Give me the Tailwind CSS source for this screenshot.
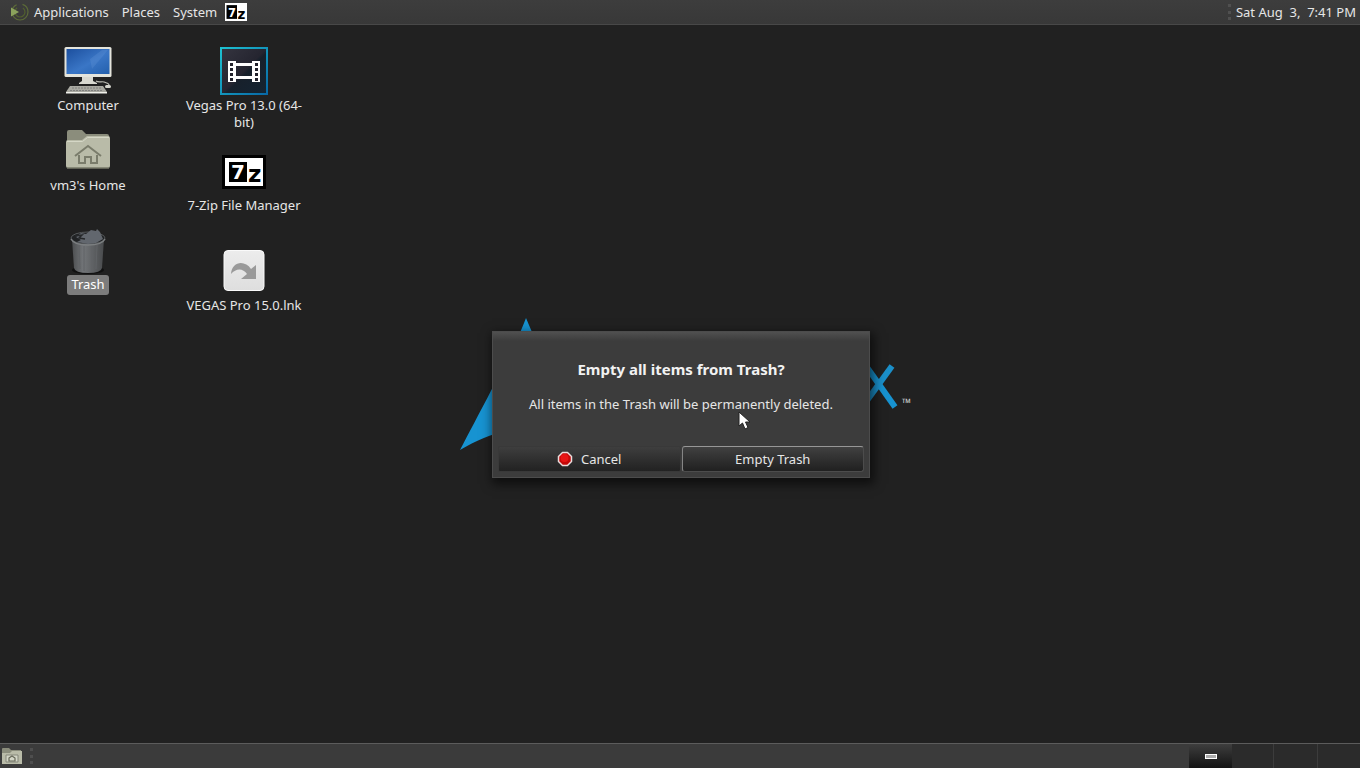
<!DOCTYPE html>
<html lang="en">
<head>
    <meta charset="UTF-8">
    <meta name="viewport" content="width=device-width, initial-scale=1.0">
    <title>Desktop</title>
    <script src="https://cdn.jsdelivr.net/npm/@tailwindcss/browser@4"></script>
</head>
<body class="flex h-screen flex-col overflow-hidden bg-[#212121] font-['Noto_Sans',sans-serif] text-[13px] leading-[17px] text-[#e6e6e6]">

    <!-- Top panel -->
    <header class="flex h-[25px] shrink-0 items-center justify-between border-b border-[#484848] bg-linear-to-b from-[#3d3d3d] to-[#383838] pr-1 pl-2">
        <nav class="flex items-center">
            <button class="flex items-center gap-1">
                <svg class="h-[22px] w-[22px]" viewBox="0 0 22 22" fill="none">
                    <circle cx="12" cy="11" r="8" stroke="#5c6b38" stroke-width="1.2" stroke-dasharray="34 6" />
                    <circle cx="12" cy="11" r="5" stroke="#52602f" stroke-width="1.2" stroke-dasharray="20 6" />
                    <path d="M3 6.500v9l8-4.500z" fill="#8ba35c" />
                </svg>
                Applications
            </button>
            <button class="ml-[13px]">Places</button>
            <button class="ml-[13px]">System</button>
            <button class="ml-2" aria-label="7-Zip">
                <svg class="h-[18px] w-[22px]" viewBox="0 0 44 34" preserveAspectRatio="none">
                    <rect width="44" height="34" fill="#fff" />
                    <rect x="3" y="4" width="21" height="26" fill="#000" />
                    <text x="6" y="26" font-family="DejaVu Sans" font-weight="bold" font-size="23" fill="#fff">7</text>
                    <text x="25" y="30" font-family="DejaVu Sans" font-weight="bold" font-size="27" fill="#000">z</text>
                </svg>
            </button>
        </nav>
        <div class="flex items-center gap-1">
            <span class="h-4 w-1 border-l-3 border-dotted border-[#505050]"></span>
            <time class="whitespace-pre">Sat Aug  3,  7:41 PM</time>
        </div>
    </header>

    <main class="relative flex-1">
        <!-- Wallpaper logo -->
        <div class="absolute inset-0 flex items-center justify-center">
            <svg class="h-[132px] w-[462px]" viewBox="0 0 462 132">
                <path d="M77 0C71 15 67 25 60 40C65 45 70 50 79 56C69 52 62 48 57 43C47 64 32 92 11 132C28 122 42 116 58 113C54 93 64 80 77 80C90 80 100 93 96 113C112 116 126 122 143 132C121 92 95 44 77 0Z" fill="#1793d1" />
                <path d="M417 48L446 89" stroke="#1793d1" stroke-width="6" />
                <path d="M443 48L414 88" stroke="#1b8fc9" stroke-width="6" />
                <text x="453" y="89" font-family="Noto Sans" font-size="12" fill="#c8c8c8">™</text>
            </svg>
        </div>

        <!-- Desktop icons -->
        <div class="absolute top-[22px] left-[28px] flex gap-9 text-center">
            <ul class="flex w-[120px] flex-col items-center">
                <li class="flex h-[67px] flex-col items-center justify-between">
                    <svg class="h-12 w-12" viewBox="0 0 48 48">
                        <defs>
                            <linearGradient id="screen" x1="0" y1="0" x2="1" y2="1">
                                <stop offset="0" stop-color="#1c4f9e" />
                                <stop offset=".55" stop-color="#3a76c6" />
                                <stop offset="1" stop-color="#2460ad" />
                            </linearGradient>
                        </defs>
                        <rect x=".5" y="0" width="47" height="30" rx="1.500" fill="#e4e4dc" />
                        <rect x="2.500" y="2" width="43" height="25" fill="url(#screen)" />
                        <path d="M26 12L38 3h6L28 22z" fill="#6d9cda" opacity=".25" />
                        <path d="M18 30h11v4l4 2v1H15v-1l3-2z" fill="#d8d8d0" />
                        <path d="M32 34c3 2 6 0 8 1s5 1 5 3" fill="none" stroke="#bdbdb5" stroke-width="1.200" />
                        <path d="M6 39h33l4 6H2z" fill="#a9a9a1" />
                        <path d="M8 41h29M6 43.500h33" stroke="#777" stroke-width=".8" stroke-dasharray="2 1" />
                        <path d="M2 45h41v1.500H2z" fill="#f0f0ea" />
                        <rect x="41" y="38" width="6" height="3" rx="1.500" fill="#d6d6ce" />
                    </svg>
                    <span>Computer</span>
                </li>
                <li class="mt-4 flex h-[64px] flex-col items-center justify-between">
                    <svg class="h-10 w-[44px]" viewBox="0 0 44 40">
                        <path d="M1 2q0-2 2-2h13l4 4h21q2 0 2 2v12H1z" fill="#8b8d7c" />
                        <path d="M0 12q0-2 2-2h14l5-4h21q2 0 2 2v28q0 2-2 2H2q-2 0-2-2z" fill="#b9bba8" />
                        <path d="M1 11.500h15.500L21.500 7.500H43" fill="none" stroke="#d5d7c6" />
                        <path d="M9 26L22 16l13 10M13 25v8h6v-6h6v6h6v-8" fill="none" stroke="#7a7c6b" stroke-width="2" />
                        <path d="M1 38h42" stroke="#777969" stroke-width="1.500" />
                    </svg>
                    <span>vm3's Home</span>
                </li>
                <li class="mt-[34px] flex h-[67px] flex-col items-center justify-between">
                    <svg class="h-[46px] w-9" viewBox="0 0 36 46">
                        <defs>
                            <linearGradient id="bin">
                                <stop offset="0" stop-color="#4c4e50" />
                                <stop offset=".35" stop-color="#727578" />
                                <stop offset="1" stop-color="#494b4d" />
                            </linearGradient>
                        </defs>
                        <ellipse cx="18" cy="42" rx="16" ry="4" fill="#111" />
                        <path d="M2 11l2 29q1 5 14 5t14-5l2-29z" fill="url(#bin)" />
                        <path d="M9 17l1 24M14 18v25M22 18v25M27 17l-1 24" stroke="#606366" />
                        <ellipse cx="18" cy="10" rx="17" ry="6" fill="#202224" stroke="#55585a" />
                        <path d="M6 9l5-4 5 1 5-4 5 1 1-2 3 3 3 7-7 4-8 1-11-2 4-2z" fill="#62676e" />
                        <path d="M5 8l7-1-3 3 6 1" fill="none" stroke="#26282a" stroke-width="1.500" />
                        <path d="M1 11q3 6 17 6t17-6" fill="none" stroke="#7c7f81" stroke-width="1.500" />
                    </svg>
                    <span class="rounded-[3px] bg-[#7c7c7c] px-1 pt-px pb-[2px] text-white">Trash</span>
                </li>
            </ul>

            <ul class="flex w-[120px] flex-col items-center">
                <li class="flex h-[84px] flex-col items-center justify-between">
                    <svg class="h-12 w-12" viewBox="0 0 48 48">
                        <defs>
                            <linearGradient id="frame" x1="0" y1="0" x2="1" y2="1">
                                <stop offset="0" stop-color="#1ec3d2" />
                                <stop offset="1" stop-color="#0767a6" />
                            </linearGradient>
                            <linearGradient id="face" x1="0" y1="0" x2="1" y2="1">
                                <stop offset="0" stop-color="#34343f" />
                                <stop offset=".5" stop-color="#252530" />
                                <stop offset=".55" stop-color="#17202b" />
                                <stop offset="1" stop-color="#142432" />
                            </linearGradient>
                        </defs>
                        <rect width="48" height="48" fill="url(#frame)" />
                        <rect x="2" y="2" width="44" height="44" fill="url(#face)" />
                        <path d="M8 14h8v2h16v-2h8v21h-8v-3H16v3H8zM16 19v10h16V19z" fill="#fff" fill-rule="evenodd" />
                        <path d="M10 16h3v3h-3zM10 21h3v3h-3zM10 26h3v3h-3zM10 31h3v3h-3zM35 16h3v3h-3zM35 21h3v3h-3zM35 26h3v3h-3zM35 31h3v3h-3z" fill="#22222c" />
                    </svg>
                    <span>Vegas Pro 13.0 (64-<br>bit)</span>
                </li>
                <li class="mt-6 flex h-[59px] flex-col items-center justify-between">
                    <svg class="h-[34px] w-[44px]" viewBox="0 0 44 34">
                        <rect width="44" height="34" fill="#000" />
                        <rect x="3" y="3" width="38" height="28" fill="#fff" />
                        <rect x="7" y="7" width="18" height="20" fill="#000" />
                        <text x="9" y="24" font-family="DejaVu Sans" font-weight="bold" font-size="20" fill="#fff">7</text>
                        <text x="26" y="27" font-family="DejaVu Sans" font-weight="bold" font-size="23" fill="#000">z</text>
                    </svg>
                    <span>7-Zip File Manager</span>
                </li>
                <li class="mt-9 flex h-[64px] flex-col items-center justify-between">
                    <svg class="h-[42px] w-[42px]" viewBox="0 0 42 42">
                        <defs>
                            <linearGradient id="tile" x1="0" y1="0" x2="0" y2="1">
                                <stop offset="0" stop-color="#ececec" />
                                <stop offset="1" stop-color="#dedede" />
                            </linearGradient>
                        </defs>
                        <rect x="1" y=".5" width="40" height="40" rx="4" fill="url(#tile)" stroke="#fafafa" />
                        <path d="M8 24C9 11 22 10 28 19L33 15V29H18L24 24C20 18 13 18 8 24Z" fill="#999" />
                    </svg>
                    <span class="whitespace-nowrap">VEGAS Pro 15.0.lnk</span>
                </li>
            </ul>
        </div>

        <!-- Empty trash dialog -->
        <div class="absolute inset-0 flex items-center justify-center pt-[41px] pl-[2px]">
            <section role="alertdialog" aria-labelledby="dialog-title" aria-describedby="dialog-text" class="relative flex w-[378px] flex-col border border-[#4c4c4c] bg-[#3c3c3c] bg-linear-to-b from-[#505050] to-[#3c3c3c] to-[9px] px-[5px] pb-[5px] text-center shadow-[2px_4px_10px_2px_rgba(0,0,0,0.6)]">
                <h1 id="dialog-title" class="mt-[27px] text-[15px] leading-5 font-bold text-[#f2f2f2]">Empty all items from Trash?</h1>
                <p id="dialog-text" class="mt-4 leading-[18px]">All items in the Trash will be permanently deleted.</p>
                <div class="mt-[33px] grid grid-cols-2 gap-px">
                    <button class="flex h-[26px] items-center justify-center gap-2 rounded-xs border border-[#393939] bg-linear-to-b from-[#3e3e3e] to-[#222]">
                        <svg class="h-4 w-4" viewBox="0 0 16 16">
                            <path d="M5.500 1.500h5l4 4v5l-4 4h-5l-4-4v-5z" fill="#c40808" stroke="#eadcdc" stroke-width="1.500" stroke-linejoin="round" />
                            <circle cx="7.500" cy="7" r="4" fill="#e81414" />
                        </svg>
                        Cancel
                    </button>
                    <button class="h-[26px] rounded-[3px] border border-[#4c4c4c] border-t-[#979797] border-l-[#858585] bg-linear-to-b from-[#414141] to-[#202020]">Empty Trash</button>
                </div>
                <!-- Mouse pointer -->
                <svg class="absolute top-[79px] left-[245px] h-[19px] w-[13px]" viewBox="0 0 13 19">
                    <path d="M1 1v14l3.500-3 2.500 6 3-1.500L7.500 11H12z" fill="#fff" stroke="#222" />
                </svg>
            </section>
        </div>
    </main>

    <!-- Bottom panel -->
    <footer class="flex h-[25px] shrink-0 justify-between border-t border-[#5c5c5c] bg-[#3b3b3b]">
        <div class="flex items-center gap-2 pl-[2px]">
            <button aria-label="Show desktop">
                <svg class="h-[18px] w-5" viewBox="0 0 20 18">
                    <path d="M0 2q0-1 1-1h6l2 2h10v5H0z" fill="#8b8d7c" />
                    <path d="M0 6h8l2-2h10v13H0z" fill="#b9bba8" />
                    <path d="M4 8h12v7H4z" fill="#d3d5c6" stroke="#85877a" />
                    <path d="M7 11l3-2 3 2v3H7z" fill="none" stroke="#666858" stroke-width="1.200" />
                </svg>
            </button>
            <span class="h-4 w-1 border-l-3 border-dotted border-[#4e4e4e]"></span>
        </div>
        <div class="flex">
            <button class="flex w-[43px] items-center justify-center bg-linear-to-b from-[#3e3e3e] to-[#141414]" aria-label="Workspace 1">
                <span class="h-[5px] w-3 border border-white bg-[#aaa]"></span>
            </button>
            <button class="w-[42px] border-r border-[#3c3c3c] bg-[#2b2b2b]" aria-label="Workspace 2"></button>
            <button class="w-[44px] border-r border-[#3c3c3c] bg-[#2b2b2b]" aria-label="Workspace 3"></button>
            <button class="w-[42px] bg-[#2b2b2b]" aria-label="Workspace 4"></button>
        </div>
    </footer>
</body>
</html>
